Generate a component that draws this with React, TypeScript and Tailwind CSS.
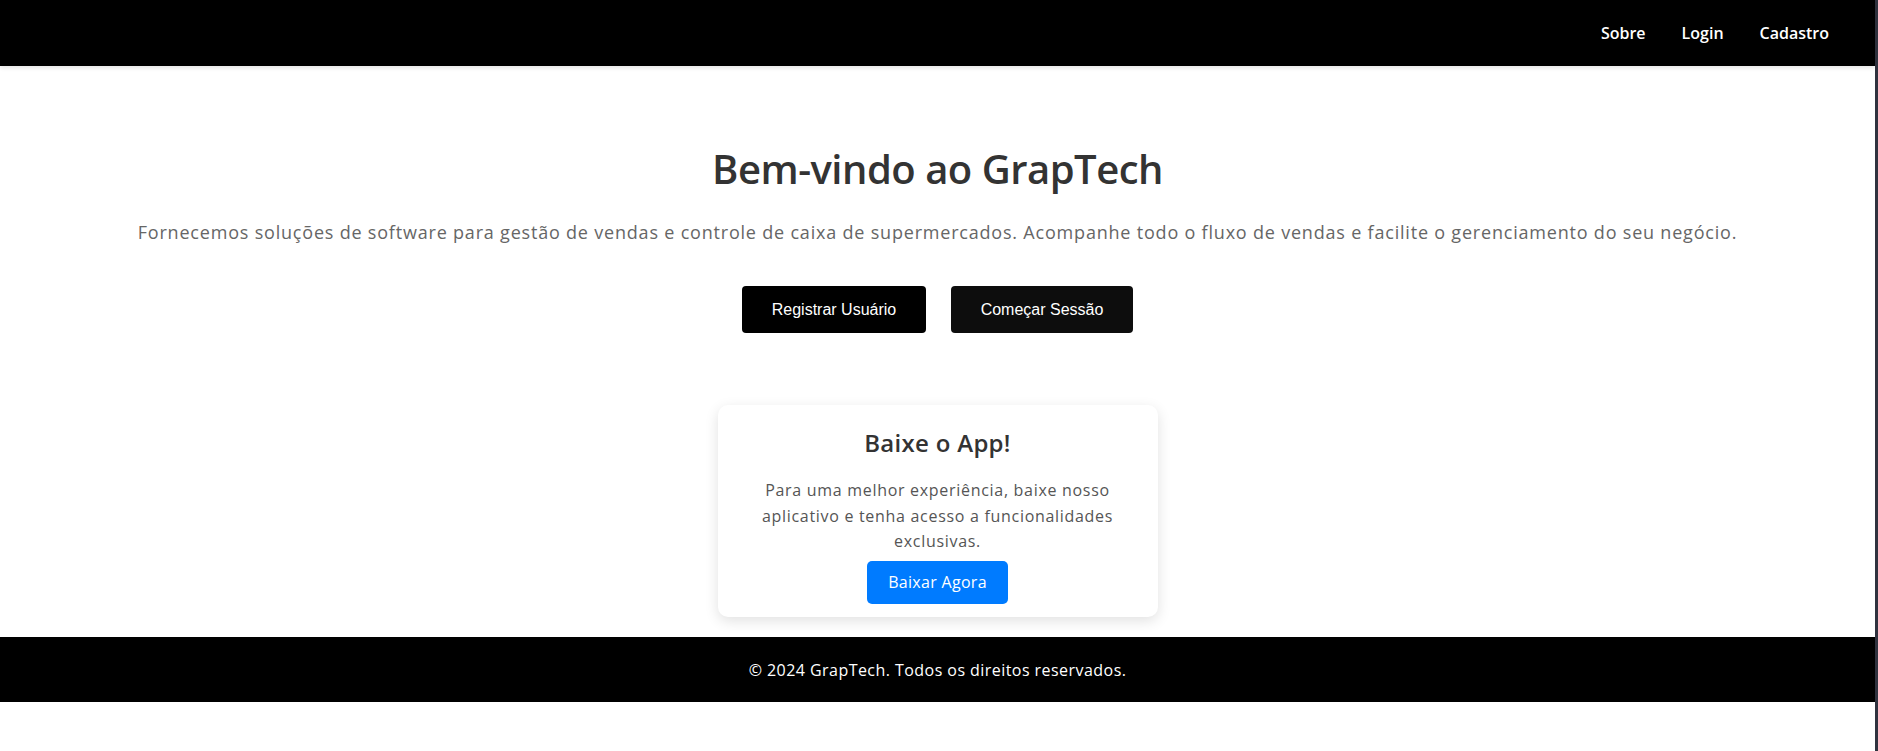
import React from "react";

export default function App() {
  const font = { fontFamily: '"Open Sans", "Noto Sans", sans-serif' };
  return (
    <div className="flex w-full bg-white" style={font}>
      <div className="flex-1 min-w-0">
        <header className="h-[66px] bg-black flex items-center justify-end pr-[46px] gap-[36px] shadow-[0_2px_4px_rgba(0,0,0,0.1)] relative">
          <a className="text-white text-[16px] font-semibold">Sobre</a>
          <a className="text-white text-[16px] font-semibold">Login</a>
          <a className="text-white text-[16px] font-semibold">Cadastro</a>
        </header>
        <main className="flex flex-col items-center">
          <h1 className="mt-[79px] text-[40px] leading-[48px] font-semibold text-[#333] tracking-[-0.5px]">
            Bem-vindo ao GrapTech
          </h1>
          <p className="mt-[26px] text-[18px] leading-[26px] text-[#666] tracking-[0.8px]">
            Fornecemos soluções de software para gestão de vendas e controle de caixa de supermercados. Acompanhe todo o fluxo de vendas e facilite o gerenciamento do seu negócio.
          </p>
          <div className="mt-[41px] flex gap-[25px]" style={{ fontFamily: '"Liberation Sans", Arial, sans-serif' }}>
            <button className="w-[184px] h-[47px] bg-black text-white text-[16px] rounded-[4px]">
              Registrar Usuário
            </button>
            <button className="w-[182px] h-[47px] bg-[#0d0d0d] text-white text-[16px] rounded-[4px]">
              Começar Sessão
            </button>
          </div>
          <div className="mt-[72px] w-[440px] h-[212px] bg-white rounded-[10px] shadow-[0_4px_14px_rgba(0,0,0,0.12)] flex flex-col items-center pt-[23px]">
            <h2 className="text-[24px] leading-[29px] font-semibold text-[#333] tracking-[0.3px]">Baixe o App!</h2>
            <p className="mt-[21px] text-[16px] leading-[25.6px] text-[#555] text-center tracking-[0.7px]">
              Para uma melhor experiência, baixe nosso
              <br />
              aplicativo e tenha acesso a funcionalidades
              <br />
              exclusivas.
            </p>
            <button className="mt-[6px] w-[141px] h-[43px] bg-[#007bff] text-white text-[16px] rounded-[5px] tracking-[0.3px]">
              Baixar Agora
            </button>
          </div>
        </main>
        <footer className="mt-[20px] h-[65px] bg-black flex items-center justify-center">
          <p className="text-white text-[16px] tracking-[0.45px]">© 2024 GrapTech. Todos os direitos reservados.</p>
        </footer>
        <div className="h-[49px]" />
      </div>
      <div className="w-[3px] bg-[#30333f] self-stretch" />
    </div>
  );
}
